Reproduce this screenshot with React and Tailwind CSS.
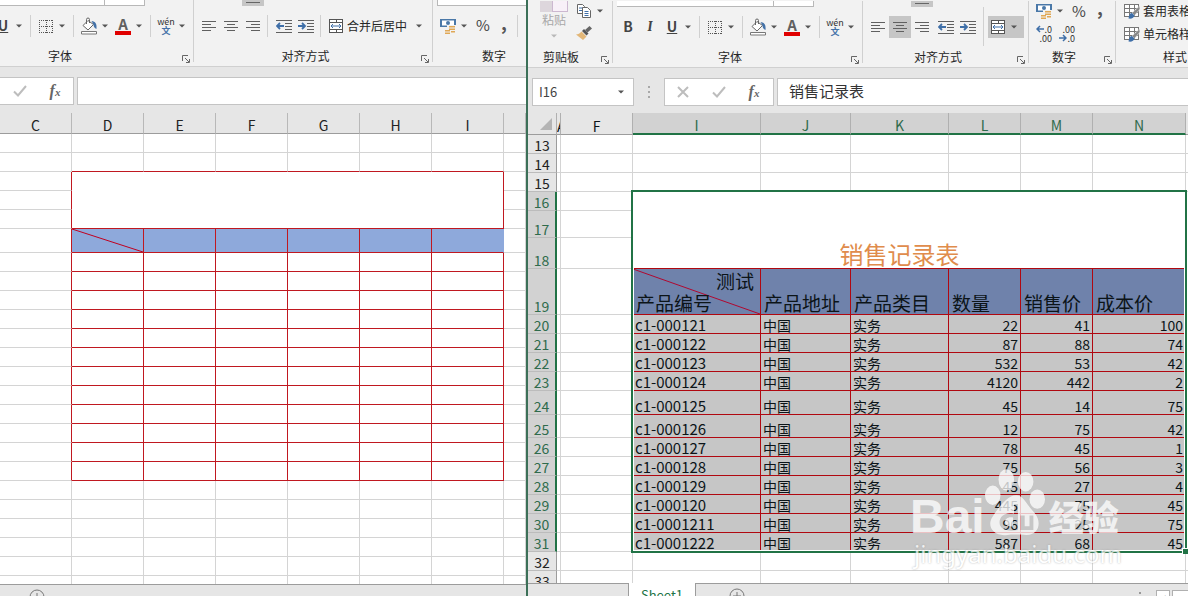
import React from 'react';

const Arrow = ({ dim }) => (
  <svg viewBox="0 0 16 16" className="w-4 h-4 shrink-0" aria-hidden="true">
    <path d="M5 6.500h6L8 9.500z" fill={dim ? '#b8b8b8' : '#555'} />
  </svg>
);

const BorderIcon = () => (
  <svg viewBox="0 0 16 16" className="w-4 h-4 shrink-0" stroke="#555" fill="none" shapeRendering="crispEdges" aria-hidden="true">
    <path d="M1 2.5h14M1 8.5h14M1 14.5h14M1.5 2v13M8.5 2v13M14.5 2v13" strokeDasharray="1 1" />
  </svg>
);

const BucketIcon = () => (
  <svg viewBox="0 0 16 18" className="w-4 h-[18px] shrink-0" fill="none" aria-hidden="true">
    <path d="M7 3.5L2 8.5l5 4.5 5.5-5.5z" fill="#fff" stroke="#666" />
    <path d="M5.5 7V2.5a1.5 1.5 0 013 0V6" stroke="#666" />
    <path d="M10.500 4c4 .5 5.500 2.500 5 8-2-1-3-2.500-3-4.500z" fill="#4472a8" />
    <path d="M.5 14.500h15v2.500H.5z" fill="#fff" stroke="#777" />
  </svg>
);

const FontColorIcon = () => (
  <span className="flex flex-col items-center w-4 h-[18px] shrink-0">
    <span className="h-[14px] text-[15px] leading-[14px] font-bold text-[#606060]">A</span>
    <span className="w-full h-1 bg-[#e00000]" />
  </span>
);

const PhoneticIcon = () => (
  <span className="flex flex-col items-center justify-center w-4 shrink-0">
    <span className="text-[9px] leading-[9px] font-normal text-[#333]">wén</span>
    <span className="text-[9px] leading-[9px] font-bold text-[#4472a8]">文</span>
  </span>
);

const alignPaths = {
  left: 'M1 3.500h14M1 6.500h9M1 9.500h14M1 12.500h9',
  center: 'M1 3.500h14M4 6.500h8M1 9.500h14M4 12.500h8',
  right: 'M1 3.500h14M6 6.500h9M1 9.500h14M6 12.500h9',
};

const AlignIcon = ({ side }) => (
  <svg viewBox="0 0 16 16" className="w-4 h-4" stroke="#606060" shapeRendering="crispEdges" aria-hidden="true">
    <path d={alignPaths[side]} />
  </svg>
);

const IndentIcon = ({ increase }) => (
  <svg viewBox="0 0 16 16" className="w-4 h-4" fill="none" stroke="#606060" aria-hidden="true">
    <path d="M0 2.500h16M9 5.500h7M9 8.500h7M9 11.500h7M0 14.500h16" shapeRendering="crispEdges" />
    <path d={increase ? 'M0 8h6M4 5l3 3-3 3' : 'M8 8H2M4 5L1 8l3 3'} stroke="#3f6fa8" strokeWidth="1.8" />
  </svg>
);

const MergeIcon = () => (
  <svg viewBox="0 0 16 16" className="w-4 h-4 shrink-0" fill="none" stroke="#555" aria-hidden="true">
    <path d="M1.500 1.500h13v13h-13zM1.500 4.500h13M1.500 11.500h13M8 1.500v3M8 11.500v3" fill="#fff" shapeRendering="crispEdges" />
    <path d="M3 8h10M5 6L3 8l2 2M11 6l2 2-2 2" stroke="#3f6fa8" />
  </svg>
);

const CurrencyIcon = () => (
  <svg viewBox="0 0 16 16" className="w-4 h-4 shrink-0" aria-hidden="true">
    <path d="M0 1h16v8H0z" fill="#4a78a8" />
    <path d="M2 2.500h12v5H2z" fill="#fff" />
    <circle cx="8" cy="5" r="2" fill="#4a78a8" />
    <path d="M7 7h9v9H4v-4h3z" fill="#f2f2f2" />
    <path d="M9 8h6v1.500H9zM9 10.500h6V12H9zM5 12h5v1.500H5zM11 13h4v1.500h-4zM5 14.500h5V16H5z" fill="#e0a856" />
  </svg>
);

const DecimalArrow = ({ left }) => (
  <svg viewBox="0 0 8 8" className="w-2 h-2" fill="none" stroke="#3f6fa8" strokeWidth="1.500" aria-hidden="true">
    <path d={left ? 'M8 4H1M4 1L1 4l3 3' : 'M0 4h7M4 1l3 3-3 3'} />
  </svg>
);

const DecimalIcon = ({ increase }) => (
  <span className="flex flex-col w-4 text-[9px] leading-[9px] text-[#333]">
    <span className="flex items-center justify-between">
      {increase && <DecimalArrow left />}
      <span className="ml-auto">{increase ? '.0' : '.00'}</span>
    </span>
    <span className="flex items-center justify-between">
      {!increase && <DecimalArrow />}
      <span className="ml-auto">{increase ? '.00' : '.0'}</span>
    </span>
  </span>
);

const StyleIcon = () => (
  <svg viewBox="0 0 16 16" className="w-4 h-4 shrink-0" fill="none" aria-hidden="true">
    <path d="M.5 1.500h14v12H.5zM.5 5.500h14M.5 9.500h14M5.500 1.500v12M10.500 1.500v12" fill="#fff" stroke="#777" shapeRendering="crispEdges" />
    <path d="M15.500 3L8 10l2.500 2.500L16 6z" fill="#888" stroke="#f2f2f2" strokeWidth=".5" />
    <path d="M8 10c-2 0-3 2-3.500 5.500 3 .5 5.500-.5 6-3z" fill="#3f6fa8" />
  </svg>
);

const CopyIcon = () => (
  <svg viewBox="0 0 16 16" className="w-4 h-4" fill="#fff" stroke="#666" aria-hidden="true">
    <path d="M1.500 1.500h5l2 2v7h-7z" />
    <path d="M3 5h4M3 7.500h4" stroke="#3f6fa8" />
    <path d="M6.500 4.500h5l3 3v7h-8z" />
    <path d="M8.500 8.500h4M8.500 10.500h4M8.500 12.500h4" stroke="#3f6fa8" />
  </svg>
);

const BrushIcon = () => (
  <svg viewBox="0 0 16 16" className="w-4 h-4" aria-hidden="true">
    <path d="M13.500 1L16 3.500 11.500 7.500 9 5z" fill="#666" />
    <path d="M8 4l4.500 4.500-2 2L6 6z" fill="#555" />
    <path d="M5.500 6.500l5 5L7 15 0 9.500c2 0 4-1 5.500-3z" fill="#e3b778" />
  </svg>
);

const Launcher = ({ label }) => (
  <button aria-label={label} className="absolute right-1 bottom-[3px]">
    <svg viewBox="0 0 8 8" className="w-2 h-2" fill="none" stroke="#666" aria-hidden="true">
      <path d="M.5 6V.5H6M3 3l4 4M7.500 4v3.500H4" />
    </svg>
  </button>
);

const Sep = () => <span className="block w-px h-[22px] ml-[3px] mr-[7px] bg-[#d0d0d0] shrink-0" />;

const Split = ({ label, children }) => (
  <button aria-label={label} className="flex items-center shrink-0">
    <span className="flex w-4 justify-center">{children}</span>
    <Arrow />
  </button>
);

const Tool = ({ label, active, children }) => (
  <button aria-label={label} className={`flex items-center justify-center w-[22px] h-[22px] shrink-0 ${active ? 'bg-[#c6c6c6]' : ''}`}>
    {children}
  </button>
);

const Percent = () => (
  <>
    <button className="w-[22px] text-[15px] text-[#444]">%</button>
    <button className="w-5 pb-2 text-[18px] leading-[18px] font-bold text-[#555]">,</button>
  </>
);

// ribbon group: clipped upper row, tool row, caption
const Group = ({ title, width, caption = 'pr-4', upper, launcher, children }) => (
  <section className={`relative flex flex-col shrink-0 ${width}`}>
    <div className="flex h-[6px] shrink-0 items-end overflow-hidden">{upper}</div>
    <div className="flex h-[39px] shrink-0 items-center">{children}</div>
    <h2 className={`text-center text-[12px] leading-[22px] text-[#262626] ${caption}`}>{title}</h2>
    {launcher && <Launcher label={title} />}
    <span className="absolute right-0 top-0 bottom-1 w-px bg-[#d0d0d0]" />
  </section>
);

const FontTools = ({ full }) => (
  <div className="flex w-full items-center justify-end gap-[2px] pr-1 text-[14px] font-bold text-[#444]">
    {full && (
      <>
        <button className="w-4 mr-1 shrink-0">B</button>
        <button className="w-4 mr-1 shrink-0 font-serif italic">I</button>
      </>
    )}
    <Split label="下划线"><span className="underline">U</span></Split>
    <span className="-mx-[2px]"><Sep /></span>
    <Split label="边框"><BorderIcon /></Split>
    <span className="-mx-[2px]"><Sep /></span>
    <Split label="填充颜色"><BucketIcon /></Split>
    <Split label="字体颜色"><FontColorIcon /></Split>
    <span className="-mx-[2px]"><Sep /></span>
    <Split label="拼音"><PhoneticIcon /></Split>
  </div>
);

const FontUpper = ({ first }) => (
  <>
    <span className={`h-full border-b border-r border-[#b8b8b8] bg-white ${first}`} />
    <span className="h-full w-10 border-b border-r border-[#b8b8b8] bg-white" />
  </>
);

const AlignUpper = () => (
  <span className="ml-12 flex h-full w-[22px] justify-center bg-[#c6c6c6]">
    <span className="mt-[2px] w-[14px] h-px bg-[#666]" />
  </span>
);

const Check = () => (
  <svg viewBox="0 0 14 14" className="w-[14px] h-[14px]" fill="none" stroke="#bdbdbd" strokeWidth="2" aria-hidden="true">
    <path d="M1 7.500l4 4L13 2" />
  </svg>
);

const Cross = () => (
  <svg viewBox="0 0 14 14" className="w-[14px] h-[14px]" fill="none" stroke="#bdbdbd" strokeWidth="2" aria-hidden="true">
    <path d="M2 2l10 10M12 2L2 12" />
  </svg>
);

const Fx = () => (
  <button aria-label="插入函数" className="w-9 font-['Liberation_Serif',serif] text-[16px] leading-none italic font-bold text-[#666]">
    f<span className="text-[11px]">x</span>
  </button>
);

const AddSheet = () => (
  <button aria-label="新工作表" className="w-4 h-4 shrink-0">
    <svg viewBox="0 0 16 16" className="w-4 h-4" fill="none" stroke="#777" aria-hidden="true">
      <circle cx="8" cy="8" r="7" />
      <path d="M8 4v8M4 8h8" />
    </svg>
  </button>
);

const leftCols = ['D', 'E', 'F', 'G', 'H', 'I'];

const LeftSheet = () => {
  const head = 'h-[21px] p-0 border-r border-b border-b-[#9c9c9c] border-r-[#b8b8b8] align-bottom text-[14px] leading-[16px] font-normal';
  const cell = 'p-0 border-r border-b';
  return (
    <table className="w-full table-fixed border-separate border-spacing-0 bg-white">
      <colgroup>
        <col className="w-[72px]" />
        {leftCols.map((c) => <col key={c} className="w-[72px]" />)}
        <col />
      </colgroup>
      <thead className="bg-[#e6e6e6] text-[#222]">
        <tr>
          <th className={head}>C</th>
          {leftCols.map((c) => <th key={c} className={head}>{c}</th>)}
          <th className={head}></th>
        </tr>
      </thead>
      <tbody>
        {Array.from({ length: 24 }, (_, r) => {
          const framed = r >= 2 && r <= 17;
          const grid = 'border-[#d4d4d4]';
          return (
            <tr key={r} className={r === 5 ? 'h-6' : 'h-[19px]'}>
              <td className={`${cell} border-b-[#d4d4d4] ${framed ? 'border-r-[#c01820]' : 'border-r-[#d4d4d4]'}`}></td>
              {r === 2 && <td colSpan={6} rowSpan={3} className={`${cell} border-[#c01820]`}></td>}
              {(r < 2 || r > 4) && leftCols.map((c) => {
                let tone = framed ? 'border-[#c01820]' : grid;
                if (r === 1) tone = 'border-r-[#d4d4d4] border-b-[#c01820]';
                if (r === 5) tone = c === 'I' ? 'bg-[#8ea9db] border-b-[#c01820] border-r-[#8ea9db]' : 'bg-[#8ea9db] border-[#c01820]';
                return (
                  <td key={c} className={`${cell} ${tone}`}>
                    {r === 5 && c === 'D' && (
                      <svg viewBox="0 0 71 23" preserveAspectRatio="none" className="block w-full h-[23px]" stroke="#c00020" aria-hidden="true">
                        <path d="M0 0L71 23" />
                      </svg>
                    )}
                  </td>
                );
              })}
              <td className={`${cell} ${grid}`}></td>
            </tr>
          );
        })}
      </tbody>
    </table>
  );
};

const LeftWindow = () => (
  <div className="flex flex-col flex-[526_1_0%] min-w-0 overflow-hidden bg-[#e6e6e6]">
    <div className="flex h-[67px] shrink-0 overflow-hidden bg-[#f2f2f2] border-b border-[#d0d0d0]">
      <Group title="字体" width="w-[194px]" caption="pr-[74px]" launcher upper={<FontUpper first="w-[105px]" />}>
        <FontTools />
      </Group>
      <Group title="对齐方式" width="w-[239px]" launcher upper={<AlignUpper />}>
        <div className="flex items-center pl-1">
          <Tool label="左对齐"><AlignIcon side="left" /></Tool>
          <Tool label="居中"><AlignIcon side="center" /></Tool>
          <Tool label="右对齐"><AlignIcon side="right" /></Tool>
          <Sep />
          <div className="flex -ml-[2px]">
            <Tool label="减少缩进量"><IndentIcon /></Tool>
            <Tool label="增加缩进量"><IndentIcon increase /></Tool>
          </div>
        </div>
        <Sep />
        <button className="flex items-center text-[12px] text-[#262626]">
          <MergeIcon />
          <span className="ml-[3px] mr-1">合并后居中</span>
          <Arrow />
        </button>
      </Group>
      <Group title="数字" width="w-[122px]" caption="" upper={<span className="ml-1 h-full w-28 border-b border-l border-[#b8b8b8] bg-white" />}>
        <div className="flex items-center pl-[7px]">
          <Split label="会计数字格式"><CurrencyIcon /></Split>
          <Percent />
          <Sep />
        </div>
      </Group>
    </div>
    <div className="flex h-[46px] shrink-0 pt-[10px] pb-2 gap-[3px]">
      <div className="flex w-[74px] items-center justify-end border-y border-r border-[#c4c4c4] bg-white">
        <button aria-label="输入" className="mr-[10px]"><Check /></button>
        <Fx />
      </div>
      <input aria-label="编辑栏" className="flex-1 min-w-0 border-y border-l border-[#c4c4c4] bg-white" />
    </div>
    <div className="flex-1 min-h-0 overflow-hidden">
      <LeftSheet />
    </div>
    <div className="flex h-3 shrink-0 overflow-hidden border-t border-[#9c9c9c] pl-[29px] pt-1">
      <AddSheet />
    </div>
  </div>
);

const records = [
  [20, 'c1-000121', 22, 41, 100],
  [21, 'c1-000122', 87, 88, 74],
  [22, 'c1-000123', 532, 53, 42],
  [23, 'c1-000124', 4120, 442, 2],
  [24, 'c1-000125', 45, 14, 75],
  [25, 'c1-000126', 12, 75, 42],
  [26, 'c1-000127', 78, 45, 1],
  [27, 'c1-000128', 75, 56, 3],
  [28, 'c1-000129', 45, 27, 4],
  [29, 'c1-000120', 445, 75, 45],
  [30, 'c1-0001211', 96, 25, 75],
  [31, 'c1-0001222', 587, 68, 45],
];

const RowHead = ({ n, selected }) => (
  <th className={`p-0 align-bottom text-[14px] leading-[16px] font-normal border-b border-b-[#bcbcbc] ${selected ? 'bg-[#d2d2d2] text-[#2f6b4c] border-r-2 border-r-[#217346]' : 'bg-[#e6e6e6] text-[#222] border-r border-r-[#9c9c9c]'}`}>
    {n}
  </th>
);

const Side = () => (
  <>
    <td className="p-0 border-r border-b border-r-[#d4d4d4] border-b-[#d4d4d4]"></td>
    <td className="p-0 border-r border-b border-[#d4d4d4]"></td>
  </>
);

const EmptyRow = ({ n }) => (
  <tr className="h-[19px]">
    <RowHead n={n} />
    <Side />
    {[1, 2, 3, 4, 5, 6].map((c) => <td key={c} className="p-0 border-r border-b border-[#d4d4d4]"></td>)}
    <td className="p-0 border-b border-[#d4d4d4]"></td>
  </tr>
);

const RightSheet = () => {
  const head = 'h-[22px] p-0 align-bottom text-[14px] leading-[16px] font-normal border-r border-r-[#b0b0b0] overflow-hidden';
  const plain = `${head} border-b border-b-[#9c9c9c]`;
  const picked = `${head} bg-[#d2d2d2] text-[#2f6b4c] border-b-2 border-b-[#217346]`;
  const title = 'bg-[#6f82ab] border-r border-b border-[#b00810] px-[3px] py-0 align-bottom text-left text-[19px] leading-[22px] font-normal whitespace-nowrap';
  const data = 'bg-[#c6c6c6] border-r border-b border-[#b00810] px-[2px] py-0 align-bottom leading-[16px] whitespace-nowrap';
  return (
    <table className="w-full table-fixed border-separate border-spacing-0 bg-white text-[#0c1418]">
      <colgroup>
        <col className="w-[29px]" />
        <col className="w-1" />
        <col className="w-[72px]" />
        <col className="w-[128px]" />
        <col className="w-[90px]" />
        <col className="w-[98px]" />
        <col className="w-[72px]" />
        <col className="w-[72px]" />
        <col className="w-[93px]" />
        <col />
      </colgroup>
      <thead className="bg-[#e6e6e6]">
        <tr>
          <th className={plain}>
            <svg viewBox="0 0 12 12" className="w-3 h-3 ml-auto mr-1 mb-1" aria-hidden="true">
              <path d="M12 0v12H0z" fill="#b4b4b4" />
            </svg>
          </th>
          <th className={plain}><span className="block w-full overflow-hidden">A</span></th>
          <th className={plain}>F</th>
          {['I', 'J', 'K', 'L', 'M', 'N'].map((c) => <th key={c} className={picked}>{c}</th>)}
          <th className="p-0 border-b border-[#9c9c9c]"></th>
        </tr>
      </thead>
      <tbody>
        <EmptyRow n={13} />
        <EmptyRow n={14} />
        <EmptyRow n={15} />
        <tr className="h-[19px]">
          <RowHead n={16} selected />
          <Side />
          <td colSpan={6} rowSpan={3} className="py-0 pl-0 pr-5 border-b border-[#b00810] align-bottom text-center text-[24px] leading-[28px] text-[#e08c4c]">
            销售记录表
          </td>
          <td></td>
        </tr>
        <tr className="h-[27px]"><RowHead n={17} selected /><Side /><td></td></tr>
        <tr className="h-[31px]"><RowHead n={18} selected /><Side /><td></td></tr>
        <tr className="h-[46px]">
          <RowHead n={19} selected />
          <Side />
          <td className="relative p-0 bg-[#6f82ab] border-r border-b border-[#b00810] text-[19px] leading-[22px]">
            <svg viewBox="0 0 127 45" preserveAspectRatio="none" className="absolute inset-0 w-full h-full" stroke="#b00830" aria-hidden="true">
              <path d="M0 0l127 45" />
            </svg>
            <div className="relative pr-[6px] text-right">测试</div>
            <div className="relative pl-[3px]">产品编号</div>
          </td>
          {['产品地址', '产品类目', '数量', '销售价', '成本价'].map((t) => <th key={t} className={title}>{t}</th>)}
          <td></td>
        </tr>
        {records.map(([n, id, count, price, cost]) => (
          <tr key={n} className={n === 24 ? 'h-6' : n === 25 ? 'h-[23px]' : 'h-[19px]'}>
            <RowHead n={n} selected />
            <Side />
            <td className={`${data} text-[15px]`}>{id}</td>
            <td className={`${data} text-[14px]`}>中国</td>
            <td className={`${data} text-[14px]`}>实务</td>
            <td className={`${data} text-[14px] text-right`}>{count}</td>
            <td className={`${data} text-[14px] text-right`}>{price}</td>
            <td className={`${data} text-[14px] text-right`}>{cost}</td>
            <td></td>
          </tr>
        ))}
        <EmptyRow n={32} />
        <EmptyRow n={33} />
      </tbody>
    </table>
  );
};

const Watermark = () => (
  <div className="absolute left-[382px] top-[355px] w-[216px] opacity-75 text-white pointer-events-none" aria-hidden="true">
    <div className="flex h-[72px] items-end">
      <span className="font-['Liberation_Sans',sans-serif] text-[48px] leading-[46px] font-bold">Bai</span>
      <svg viewBox="0 0 62 70" className="w-[60px] h-[70px] mb-[2px] shrink-0" fill="#fff">
        <ellipse cx="8" cy="27" rx="8" ry="10" />
        <ellipse cx="22" cy="11" rx="8" ry="11" />
        <ellipse cx="42" cy="13" rx="8" ry="10" />
        <ellipse cx="54" cy="31" rx="8" ry="10" />
        <path fillRule="evenodd" d="M32 27c8 0 11 10 19 18 8 9 5 23-8 23-7 0-12-1-20 0C9 70 1 59 8 49c5-8 15-22 24-22zM30 36v10c-8-2-15 2-15 9s7 10 19 8V36zM29 50v9c-11 2-11-11 0-9zM37 48v15h13V48h-4v11h-5V48z" />
      </svg>
      <span className="ml-1 mb-1 text-[35px] leading-[40px] font-black whitespace-nowrap">经验</span>
    </div>
    <div className="font-['Noto_Sans',sans-serif] text-[24px] leading-[28px] text-center [text-shadow:0_0_2px_#999]">jingyan.baidu.com</div>
  </div>
);

const RightWindow = () => (
  <div className="flex flex-col flex-[660_1_0%] min-w-0 overflow-hidden bg-[#e6e6e6] border-l-2 border-[#3c7058]">
    <div className="flex h-[68px] shrink-0 overflow-hidden bg-[#f2f2f2] border-b border-[#d0d0d0] pt-px">
      <section className="relative flex flex-col w-[85px] shrink-0">
        <div className="flex h-[45px] shrink-0 items-start pl-3">
          <button className="relative flex flex-col items-center text-[12px] leading-[16px] text-[#a8a8a8] shrink-0">
            <span className="flex h-[11px]">
              <span className="w-3 bg-[#ddd6dc]" />
              <span className="w-4 border border-[#ccb8d0] border-t-0 bg-[#f8f0f8]" />
            </span>
            粘贴
            <Arrow dim />
          </button>
          <div className="flex flex-col gap-[6px] pl-2 pt-[2px]">
            <Split label="复制"><CopyIcon /></Split>
            <button aria-label="格式刷"><BrushIcon /></button>
          </div>
        </div>
        <h2 className="pl-[15px] text-[12px] leading-[22px] text-[#262626]">剪贴板</h2>
        <Launcher label="剪贴板" />
        <span className="absolute right-0 top-0 bottom-1 w-px bg-[#d0d0d0]" />
      </section>
      <Group title="字体" width="w-[250px]" launcher upper={<FontUpper first="ml-1 w-[157px]" />}>
        <FontTools full />
      </Group>
      <Group title="对齐方式" width="w-[166px]" launcher upper={<AlignUpper />}>
        <div className="flex items-center pl-1">
          <Tool label="左对齐"><AlignIcon side="left" /></Tool>
          <Tool label="居中" active><AlignIcon side="center" /></Tool>
          <Tool label="右对齐"><AlignIcon side="right" /></Tool>
          <span className="w-[2px]" />
          <Tool label="减少缩进量"><IndentIcon /></Tool>
          <Tool label="增加缩进量"><IndentIcon increase /></Tool>
        </div>
        <span className="w-px h-full ml-1 mr-1 bg-[#d0d0d0]" />
        <button aria-label="合并后居中" className="flex items-center h-[22px] px-[2px] bg-[#c6c6c6]">
          <MergeIcon />
          <Arrow />
        </button>
      </Group>
      <section className="relative flex flex-col w-[87px] shrink-0">
        <div className="flex h-5 shrink-0 items-center pl-[7px]">
          <Split label="会计数字格式"><CurrencyIcon /></Split>
          <Percent />
        </div>
        <div className="flex h-[25px] shrink-0 items-center gap-[7px] pl-[7px]">
          <button aria-label="增加小数位数"><DecimalIcon increase /></button>
          <button aria-label="减少小数位数"><DecimalIcon /></button>
        </div>
        <h2 className="pl-[23px] text-[12px] leading-[22px] text-[#262626]">数字</h2>
        <Launcher label="数字" />
        <span className="absolute right-0 top-0 bottom-1 w-px bg-[#d0d0d0]" />
      </section>
      <section className="flex flex-col flex-1 min-w-0 pl-2 text-[12px] text-[#262626] whitespace-nowrap">
        <button className="flex h-5 shrink-0 items-center gap-[3px]"><StyleIcon />套用表格格式</button>
        <button className="flex h-[25px] shrink-0 items-center gap-[3px]"><StyleIcon />单元格样式</button>
        <h2 className="pl-[39px] leading-[22px]">样式</h2>
      </section>
    </div>
    <div className="flex h-[45px] shrink-0 pt-[10px] pb-[7px] pl-1">
      <div className="flex w-[102px] items-center border border-[#c4c4c4] bg-white pr-[2px]">
        <input aria-label="名称框" defaultValue="I16" className="w-20 pl-[6px] text-[13px] text-[#444]" />
        <Arrow />
      </div>
      <div className="flex w-[30px] flex-col items-center justify-center gap-[3px]">
        <span className="w-[2px] h-[2px] bg-[#a8a8a8]" />
        <span className="w-[2px] h-[2px] bg-[#a8a8a8]" />
        <span className="w-[2px] h-[2px] bg-[#a8a8a8]" />
      </div>
      <div className="flex w-[110px] items-center border border-[#c4c4c4] bg-white pl-[11px]">
        <button aria-label="取消" className="mr-[22px]"><Cross /></button>
        <button aria-label="输入" className="mr-[10px]"><Check /></button>
        <Fx />
      </div>
      <input aria-label="编辑栏" defaultValue="销售记录表" className="flex-1 min-w-0 ml-[3px] pl-[11px] pb-[2px] border-y border-l border-[#c4c4c4] bg-white text-[15px] text-[#333]" />
    </div>
    <div className="relative flex-1 min-h-0 overflow-hidden">
      <RightSheet />
      <div className="absolute left-[103px] top-[77px] w-[556px] h-[363px] border-2 border-[#217346] shadow-[inset_0_0_0_1px_#fff] pointer-events-none">
        <span className="absolute -right-[3px] -bottom-[3px] w-[6px] h-[6px] border-l border-t border-white bg-[#217346]" />
      </div>
      <Watermark />
    </div>
    <div className="flex h-[13px] shrink-0 overflow-hidden">
      <div className="flex w-[100px] justify-center gap-5 border-t border-[#9c9c9c] pt-2 text-[10px] leading-[10px] text-[#aaa]">
        <button aria-label="上一张">◂</button>
        <button aria-label="下一张">▸</button>
      </div>
      <button className="w-[68px] h-6 bg-white border-x border-[#9c9c9c] text-[13px] leading-6 text-[#217346]">Sheet1</button>
      <div className="flex flex-1 items-start border-t border-[#9c9c9c] pl-[33px] pt-1">
        <AddSheet />
        <span className="ml-auto mr-[15px] mt-1 w-[2px] h-[2px] bg-[#999]" />
        <button aria-label="向左滚动" className="flex w-[14px] h-4 mt-[2px] justify-center border border-[#b0b0b0] bg-white text-[9px] leading-3 text-[#555]">◂</button>
        <span className="w-4 h-4 mt-[2px] ml-[2px] border border-r-0 border-[#b0b0b0] bg-white" />
      </div>
    </div>
  </div>
);

const App = () => {
  return (
    <div className="flex h-screen overflow-hidden font-['Noto_Sans_CJK_SC',sans-serif]">
      <LeftWindow />
      <RightWindow />
    </div>
  );
};

export default App;
